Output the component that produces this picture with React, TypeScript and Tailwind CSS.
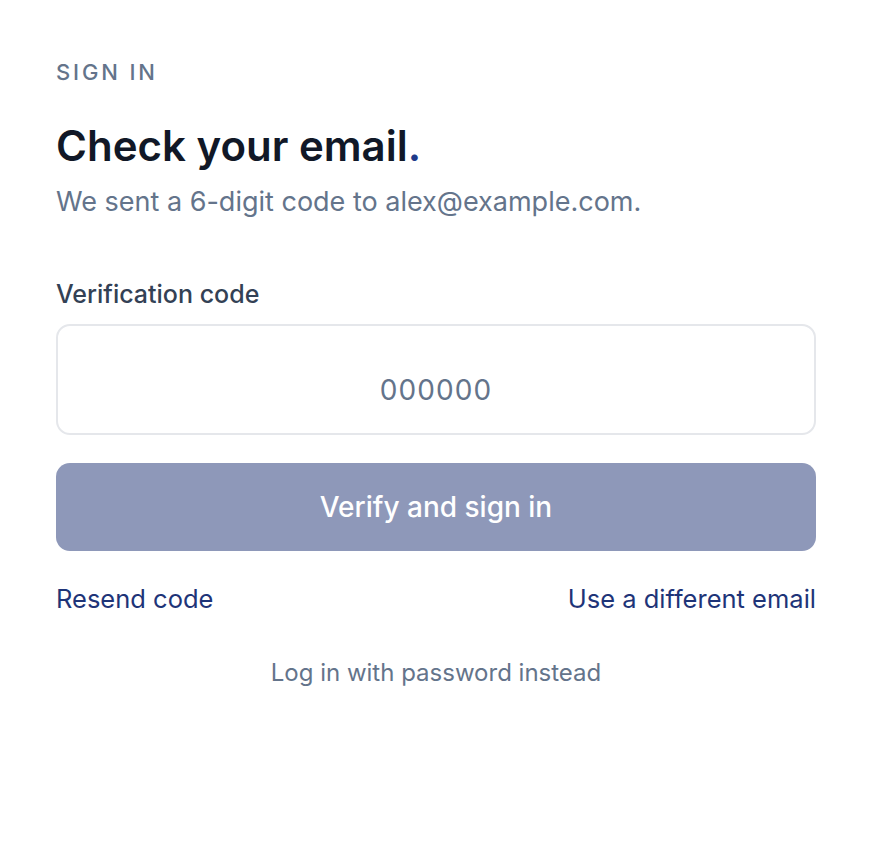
export default function App() {
  return (
    <div className="min-h-screen bg-white font-['Inter',sans-serif]">
      <div className="px-14 pt-[58px]">
        <p className="text-[22px] leading-7 tracking-[0.13em] text-[#64748b] font-medium">
          SIGN IN
        </p>

        <h1 className="mt-[34px] text-[42px] leading-[52px] font-semibold text-[#111827]">
          Check your email<span className="text-[#1e3a8a]">.</span>
        </h1>
        <p className="mt-[12px] text-[27px] leading-9 text-[#64748b]">
          We sent a 6-digit code to alex@example.com.
        </p>

        <label className="block mt-[58px] text-[25px] leading-8 font-medium text-[#334155]">
          Verification code
        </label>
        <div className="mt-[14px] h-[111px] rounded-[14px] border-2 border-[#e5e7eb] flex items-center justify-center pt-[20px]">
          <span className="text-[28px] tracking-[0.04em] text-[#64748b]">000000</span>
        </div>

        <button className="mt-[28px] w-full h-[88px] rounded-[14px] bg-[#8e98b9] text-white text-[28px] font-medium">
          Verify and sign in
        </button>

        <div className="mt-[30px] flex items-center justify-between text-[25.5px] leading-9 text-[#1e3478]">
          <a>Resend code</a>
          <a>Use a different email</a>
        </div>

        <p className="mt-[40px] text-center text-[24px] leading-8 text-[#64748b]">
          Log in with password instead
        </p>
      </div>
    </div>
  );
}
